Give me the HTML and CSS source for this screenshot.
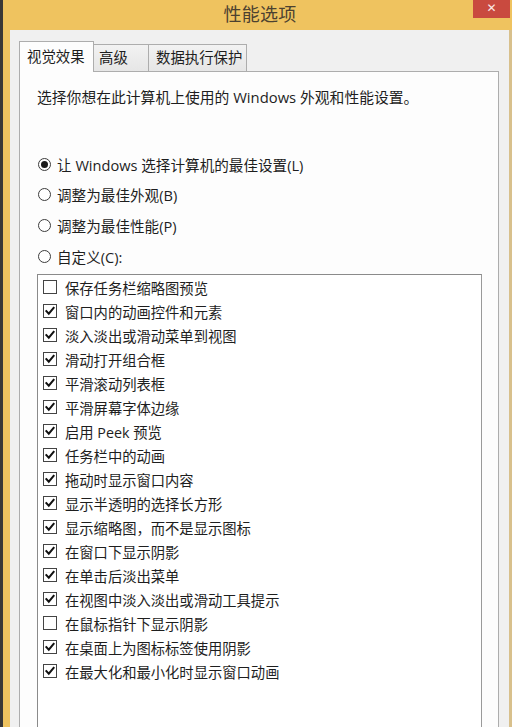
FILE: index.html
```html
<!DOCTYPE html>
<html lang="zh-CN">
<head>
<meta charset="utf-8">
<title>性能选项</title>
<link rel="stylesheet" href="styles.css">
</head>
<body>
<div class="window">
  <div class="titlebar">
    <span></span>
    <span class="title">性能选项</span>
    <span class="close">✕</span>
  </div>
  <div class="frame">
    <div class="dialog">
      <div class="tabs">
        <div class="tab active">视觉效果</div>
        <div class="tab">高级</div>
        <div class="tab">数据执行保护</div>
      </div>
      <div class="panel">
        <p class="desc">选择你想在此计算机上使用的 Windows 外观和性能设置。</p>
        <div class="radios">
          <div class="radio-row"><span class="radio on"></span><span>让 Windows 选择计算机的最佳设置(L)</span></div>
          <div class="radio-row"><span class="radio"></span><span>调整为最佳外观(B)</span></div>
          <div class="radio-row"><span class="radio"></span><span>调整为最佳性能(P)</span></div>
          <div class="radio-row"><span class="radio"></span><span>自定义(C):</span></div>
        </div>
        <div class="listbox">
          <div class="item"><span class="cb"></span><span>保存任务栏缩略图预览</span></div>
          <div class="item"><span class="cb checked"><svg viewBox="0 0 13 13"><path d="M2.6 6.6 L5.2 9.4 L10.4 3.2" /></svg></span><span>窗口内的动画控件和元素</span></div>
          <div class="item"><span class="cb checked"><svg viewBox="0 0 13 13"><path d="M2.6 6.6 L5.2 9.4 L10.4 3.2" /></svg></span><span>淡入淡出或滑动菜单到视图</span></div>
          <div class="item"><span class="cb checked"><svg viewBox="0 0 13 13"><path d="M2.6 6.6 L5.2 9.4 L10.4 3.2" /></svg></span><span>滑动打开组合框</span></div>
          <div class="item"><span class="cb checked"><svg viewBox="0 0 13 13"><path d="M2.6 6.6 L5.2 9.4 L10.4 3.2" /></svg></span><span>平滑滚动列表框</span></div>
          <div class="item"><span class="cb checked"><svg viewBox="0 0 13 13"><path d="M2.6 6.6 L5.2 9.4 L10.4 3.2" /></svg></span><span>平滑屏幕字体边缘</span></div>
          <div class="item"><span class="cb checked"><svg viewBox="0 0 13 13"><path d="M2.6 6.6 L5.2 9.4 L10.4 3.2" /></svg></span><span>启用 Peek 预览</span></div>
          <div class="item"><span class="cb checked"><svg viewBox="0 0 13 13"><path d="M2.6 6.6 L5.2 9.4 L10.4 3.2" /></svg></span><span>任务栏中的动画</span></div>
          <div class="item"><span class="cb checked"><svg viewBox="0 0 13 13"><path d="M2.6 6.6 L5.2 9.4 L10.4 3.2" /></svg></span><span>拖动时显示窗口内容</span></div>
          <div class="item"><span class="cb checked"><svg viewBox="0 0 13 13"><path d="M2.6 6.6 L5.2 9.4 L10.4 3.2" /></svg></span><span>显示半透明的选择长方形</span></div>
          <div class="item"><span class="cb checked"><svg viewBox="0 0 13 13"><path d="M2.6 6.6 L5.2 9.4 L10.4 3.2" /></svg></span><span>显示缩略图，而不是显示图标</span></div>
          <div class="item"><span class="cb checked"><svg viewBox="0 0 13 13"><path d="M2.6 6.6 L5.2 9.4 L10.4 3.2" /></svg></span><span>在窗口下显示阴影</span></div>
          <div class="item"><span class="cb checked"><svg viewBox="0 0 13 13"><path d="M2.6 6.6 L5.2 9.4 L10.4 3.2" /></svg></span><span>在单击后淡出菜单</span></div>
          <div class="item"><span class="cb checked"><svg viewBox="0 0 13 13"><path d="M2.6 6.6 L5.2 9.4 L10.4 3.2" /></svg></span><span>在视图中淡入淡出或滑动工具提示</span></div>
          <div class="item"><span class="cb"></span><span>在鼠标指针下显示阴影</span></div>
          <div class="item"><span class="cb checked"><svg viewBox="0 0 13 13"><path d="M2.6 6.6 L5.2 9.4 L10.4 3.2" /></svg></span><span>在桌面上为图标标签使用阴影</span></div>
          <div class="item"><span class="cb checked"><svg viewBox="0 0 13 13"><path d="M2.6 6.6 L5.2 9.4 L10.4 3.2" /></svg></span><span>在最大化和最小化时显示窗口动画</span></div>
        </div>
      </div>
    </div>
  </div>
</div>
</body>
</html>
```
FILE: styles.css
```css
* { box-sizing: border-box; }
html, body {
  margin: 0;
  padding: 0;
  width: 512px;
  height: 727px;
  overflow: hidden;
  background: #3a3836;
  font-family: "Open Sans", "Noto Sans CJK SC", sans-serif;
  color: #1e1e1e;
}
.window {
  margin-left: 3px;
  height: 727px;
  overflow: hidden;
  background: #efc35f;
  display: flex;
  flex-direction: column;
}
.titlebar {
  height: 30px;
  flex: none;
  display: grid;
  grid-template-columns: 1fr auto 1fr;
  align-items: start;
}
.title {
  font-family: "Noto Sans CJK SC", sans-serif;
  font-size: 18px;
  line-height: 24px;
  padding-top: 1px;
  color: #4c4130;
  padding-left: 5px;
  letter-spacing: 0.2px;
}
.close {
  justify-self: end;
  width: 37px;
  height: 18px;
  margin-right: 2px;
  background: #c94a3f;
  color: #fbe9e6;
  font-family: "DejaVu Sans", sans-serif;
  font-size: 12px;
  line-height: 17px;
  text-align: center;
  font-weight: bold;
}
.frame {
  flex: 1;
  min-height: 0;
  padding: 0 0 0 7px;
  display: flex;
}
.dialog {
  flex: 1;
  background: #f0f0f0;
  border-right: 3px solid #d8c08c;
  padding: 11px 10px 0 9px;
  display: flex;
  flex-direction: column;
}
.tabs {
  display: flex;
  align-items: flex-end;
  height: 30px;
  flex: none;
  position: relative;
  z-index: 1;
}
.tab {
  height: 27px;
  border: 1px solid #adadad;
  border-bottom: none;
  background: linear-gradient(#f2f2f2, #e6e6e6);
  font-size: 14.4px;
  line-height: 25px;
  padding: 0 4px;
  white-space: nowrap;
  color: #1e1e1e;
}
.tab + .tab { margin-left: -1px; }
.tab:nth-child(2) { width: 56px; padding-left: 5px; }
.tab:nth-child(3) { width: 99px; padding-left: 7px; }
.tab.active {
  width: 75px;
  height: 31px;
  margin-bottom: -1px;
  background: #fdfdfd;
  padding-left: 7px;
  line-height: 30px;
}
.panel {
  flex: 1;
  min-height: 0;
  background: #fdfdfd;
  border: 1px solid #adadad;
  border-bottom: none;
  padding: 15px 16px 0 17px;
  display: flex;
  flex-direction: column;
}
.desc {
  margin: 0;
  font-size: 14.8px;
  line-height: 20px;
  white-space: nowrap;
}
.radios {
  margin-top: 42px;
  display: flex;
  flex-direction: column;
}
.radio-row {
  height: 30.6px;
  display: flex;
  align-items: center;
  font-size: 14.6px;
  white-space: nowrap;
}
.radio {
  width: 13px;
  height: 13px;
  border: 1px solid #3c3c3c;
  border-radius: 50%;
  background: #fff;
  margin: 0 6px 0 1px;
  flex: none;
  display: flex;
  align-items: center;
  justify-content: center;
}
.radio.on::after {
  content: "";
  width: 7px;
  height: 7px;
  border-radius: 50%;
  background: #1a1a1a;
}
.listbox {
  margin-top: 3px;
  flex: 1;
  background: #fff;
  border: 1px solid #8a8a8a;
  border-right-color: #9a9a9a;
  border-bottom: none;
  padding: 0 0 0 5px;
}
.item {
  height: 24px;
  display: flex;
  align-items: center;
  font-size: 14.3px;
  white-space: nowrap;
}
.cb {
  width: 14px;
  height: 14px;
  border: 1px solid #444;
  background: #fff;
  margin-right: 8px;
  flex: none;
  display: flex;
}
.cb svg {
  width: 12px;
  height: 12px;
}
.cb svg path {
  fill: none;
  stroke: #111;
  stroke-width: 2.2;
  stroke-linecap: square;
}
```
